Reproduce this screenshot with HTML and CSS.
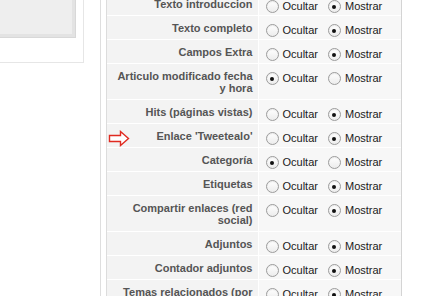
FILE: index.html
```html
<!DOCTYPE html>
<html lang="es">
<head>
<meta charset="utf-8">
<title>Opciones</title>
<link rel="stylesheet" href="styles.css">
</head>
<body>
<div class="page">
  <div class="side">
    <div class="outer"><div class="inner"></div></div>
  </div>
  <div class="gap"></div>
  <div class="main">
    <table class="opts">
      <tr><th>Texto introduccion</th><td><span class="r"></span><span class="t1">Ocultar</span><span class="r on"></span><span>Mostrar</span></td></tr>
      <tr><th>Texto completo</th><td><span class="r"></span><span class="t1">Ocultar</span><span class="r on"></span><span>Mostrar</span></td></tr>
      <tr><th>Campos Extra</th><td><span class="r"></span><span class="t1">Ocultar</span><span class="r on"></span><span>Mostrar</span></td></tr>
      <tr><th>Articulo modificado fecha y hora</th><td><span class="r on"></span><span class="t1">Ocultar</span><span class="r"></span><span>Mostrar</span></td></tr>
      <tr><th>Hits (páginas vistas)</th><td><span class="r"></span><span class="t1">Ocultar</span><span class="r on"></span><span>Mostrar</span></td></tr>
      <tr><th>Enlace 'Tweetealo'</th><td><span class="r"></span><span class="t1">Ocultar</span><span class="r on"></span><span>Mostrar</span></td></tr>
      <tr><th>Categoría</th><td><span class="r on"></span><span class="t1">Ocultar</span><span class="r"></span><span>Mostrar</span></td></tr>
      <tr><th>Etiquetas</th><td><span class="r"></span><span class="t1">Ocultar</span><span class="r on"></span><span>Mostrar</span></td></tr>
      <tr><th>Compartir enlaces (red social)</th><td><span class="r"></span><span class="t1">Ocultar</span><span class="r on"></span><span>Mostrar</span></td></tr>
      <tr><th>Adjuntos</th><td><span class="r"></span><span class="t1">Ocultar</span><span class="r on"></span><span>Mostrar</span></td></tr>
      <tr><th>Contador adjuntos</th><td><span class="r"></span><span class="t1">Ocultar</span><span class="r on"></span><span>Mostrar</span></td></tr>
      <tr><th>Temas relacionados (por etiquetas)</th><td><span class="r"></span><span class="t1">Ocultar</span><span class="r on"></span><span>Mostrar</span></td></tr>
    </table>
    <svg class="arrow" width="22" height="17" viewBox="0 0 22 17">
      <path d="M1.5 5.5 H12.5 V1.5 L20.5 8.5 L12.5 15.5 V11.5 H1.5 Z" fill="#fff" stroke="#e02a20" stroke-width="1.4" stroke-linejoin="miter"/>
    </svg>
  </div>
</div>
</body>
</html>
```
FILE: styles.css
```css
html, body {
  margin: 0;
  padding: 0;
  background: #fff;
  overflow: hidden;
}
body {
  font-family: "Liberation Sans", Arial, sans-serif;
}
.page {
  display: flex;
  align-items: flex-start;
  height: 296px;
}
.side {
  width: 100px;
  height: 296px;
  border-right: 1px solid #dedede;
  flex: none;
}
.outer {
  box-sizing: border-box;
  width: 94px;
  height: 73px;
  margin: -10px 0 0 -10px;
  border: 1px solid #e6e6e6;
  background: #fff;
}
.inner {
  box-sizing: border-box;
  width: 86px;
  height: 48px;
  margin: -1px 0 0 -1px;
  border: 1px solid #d8d8d8;
  box-shadow: inset -3px -3px 0 #e3e3e3;
  background: #eeeeee;
}
.gap {
  width: 5px;
  flex: none;
}
.main {
  position: relative;
  width: 294px;
  height: 296px;
  flex: none;
  border-left: 1px solid #dcdcdc;
  border-right: 1px solid #d4d4d4;
  background: #f6f6f6;
  overflow: hidden;
}
.opts {
  border-collapse: collapse;
  width: 294px;
  margin-top: -8px;
}
.opts th {
  box-sizing: border-box;
  width: 151px;
  padding: 6px 5px 5px 10px;
  text-align: right;
  vertical-align: middle;
  font-size: 11px;
  line-height: 12px;
  font-weight: bold;
  color: #555;
  background: #f3f3f3;
  border-right: 1px solid #fff;
  border-bottom: 1px solid #fff;
}
.opts td {
  padding: 7px 0 0 7px;
  vertical-align: top;
  font-size: 11px;
  line-height: 14px;
  color: #1a1a1a;
  background: #f7f7f7;
  border-bottom: 1px solid #fff;
  white-space: nowrap;
}
.opts td span {
  display: inline-block;
  vertical-align: top;
}
.r {
  box-sizing: border-box;
  width: 13px;
  height: 13px;
  margin-top: 1px;
  border-radius: 50%;
  border: 1px solid #9c9c9c;
  background: linear-gradient(#ffffff, #ececec);
  box-shadow: inset 0 1px 1px rgba(0,0,0,0.08);
  margin-right: 4px;
  position: relative;
}
.r.on::after {
  content: "";
  position: absolute;
  left: 3.5px;
  top: 3.5px;
  width: 4px;
  height: 4px;
  border-radius: 50%;
  background: #111;
}
.t1 {
  margin-right: 10px;
}
.arrow {
  position: absolute;
  left: 1px;
  top: 130px;
}
```
